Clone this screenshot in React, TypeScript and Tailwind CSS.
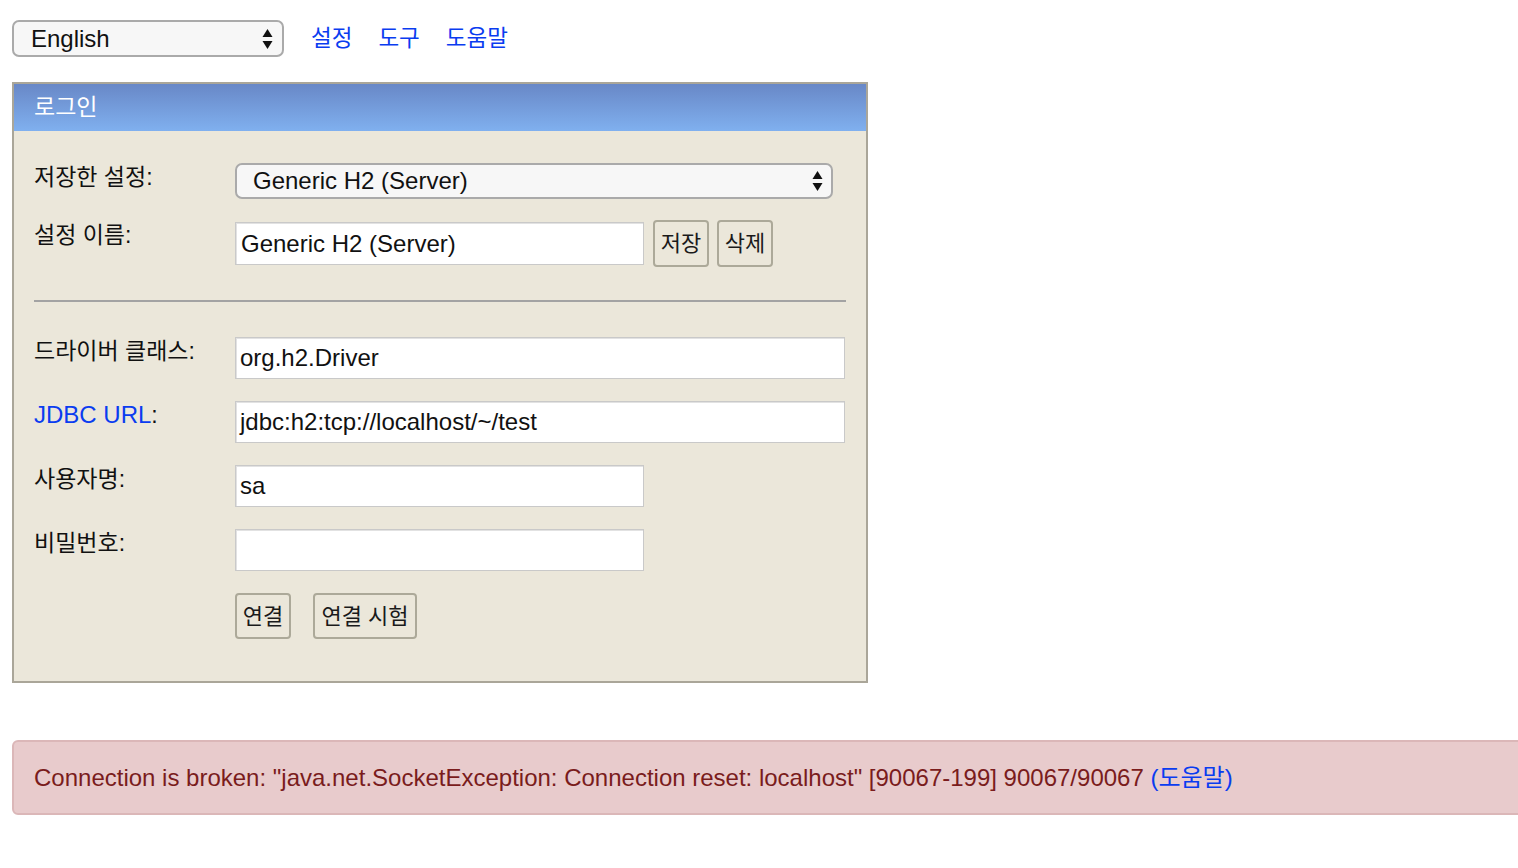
import React from "react";

const FONT = "font-['Liberation_Sans','Noto_Sans_CJK_KR',Arial,sans-serif]";

function Arrows() {
  return (
    <svg width="11" height="22" viewBox="0 0 11 22" className="shrink-0">
      <polygon points="5.5,1 10.5,9 0.5,9" fill="#111" />
      <polygon points="0.5,13 10.5,13 5.5,21" fill="#111" />
    </svg>
  );
}

function FakeSelect({ value, className }: { value: string; className: string }) {
  return (
    <div
      className={`flex items-center justify-between rounded-[7px] border-2 border-[#aaaaaa] bg-[#f7f7f7] text-[24px] ${className}`}
    >
      <span className="leading-none">{value}</span>
      <Arrows />
    </div>
  );
}

function TextBox({ value, className }: { value: string; className: string }) {
  return (
    <div
      className={`flex items-center border border-[#c9c9c9] bg-white pl-[4px] text-[24px] shadow-[inset_1px_1px_0_#e2e2e2] ${className}`}
    >
      {value}
    </div>
  );
}

function Btn({ label, className = "" }: { label: string; className?: string }) {
  return (
    <button
      className={`flex items-center justify-center rounded-[4px] border-2 border-[#aca999] bg-[#ebe7da] text-[22px] text-[#1a1a1a] ${className}`}
    >
      {label}
    </button>
  );
}

function Row({
  label,
  children,
  className = "",
  labelPad = "pt-[1px]",
}: {
  label: React.ReactNode;
  children: React.ReactNode;
  className?: string;
  labelPad?: string;
}) {
  return (
    <div className={`flex items-start ${className}`}>
      <div className={`w-[201px] shrink-0 leading-[26px] ${labelPad}`}>{label}</div>
      {children}
    </div>
  );
}

export default function App() {
  return (
    <div className={`min-h-screen w-full overflow-hidden bg-white text-[23px] text-[#111] ${FONT}`}>
      <div className="flex items-center pl-3 pt-5">
        <FakeSelect value="English" className="h-[37px] w-[272px] pl-[17px] pr-[9px]" />
        <nav className="ml-[27px] flex gap-[26px] text-[22.5px] text-[#0a3cf0]">
          <a className="cursor-pointer">설정</a>
          <a className="cursor-pointer">도구</a>
          <a className="cursor-pointer">도움말</a>
        </nav>
      </div>

      <section className="ml-3 mt-[25px] w-[856px] border-2 border-[#aaa699] bg-[#ebe7da]">
        <div className="flex h-[47px] items-center bg-linear-to-b from-[#6888c7] to-[#80b0ef] px-5 text-white">
          로그인
        </div>

        <div className="px-5 pb-[42px] pt-8">
          <Row label="저장한 설정:">
            <FakeSelect value="Generic H2 (Server)" className="h-[36px] w-[598px] pl-[16px] pr-[8px]" />
          </Row>

          <Row label="설정 이름:" className="mt-[21px]" labelPad="pt-[2px]">
            <TextBox value="Generic H2 (Server)" className="mt-[2px] h-[43px] w-[409px] pl-[5px]" />
            <Btn label="저장" className="ml-[9px] h-[47px] w-[56px]" />
            <Btn label="삭제" className="ml-2 h-[47px] w-[56px]" />
          </Row>

          <hr className="mt-[33px] h-[2px] border-0 border-t-2 border-[#a3a3a3]" />

          <Row label="드라이버 클래스:" className="mt-[35px]">
            <TextBox value="org.h2.Driver" className="h-[42px] w-[610px]" />
          </Row>

          <Row
            label={
              <>
                <a className="cursor-pointer text-[24px] text-[#0a3cf0]">JDBC URL</a>:
              </>
            }
            className="mt-[22px]"
          >
            <TextBox value="jdbc:h2:tcp://localhost/~/test" className="h-[42px] w-[610px]" />
          </Row>

          <Row label="사용자명:" className="mt-[22px]">
            <TextBox value="sa" className="h-[42px] w-[409px]" />
          </Row>

          <Row label="비밀번호:" className="mt-[22px]">
            <TextBox value="" className="h-[42px] w-[409px]" />
          </Row>

          <div className="mt-[22px] flex gap-[22px] pl-[201px]">
            <Btn label="연결" className="h-[46px] w-[56px]" />
            <Btn label="연결 시험" className="h-[46px] w-[104px]" />
          </div>
        </div>
      </section>

      <div className="ml-3 mt-[57px] flex h-[75px] w-[1540px] items-center rounded-[6px] border-2 border-[#dbb7b8] bg-[#e8cbcc] pl-5 text-[24px] text-[#7a1c1c]">
        <span>
          Connection is broken: "java.net.SocketException: Connection reset: localhost" [90067-199]
          90067/90067 <a className="cursor-pointer text-[#0a3cf0]">(도움말)</a>
        </span>
      </div>
    </div>
  );
}
